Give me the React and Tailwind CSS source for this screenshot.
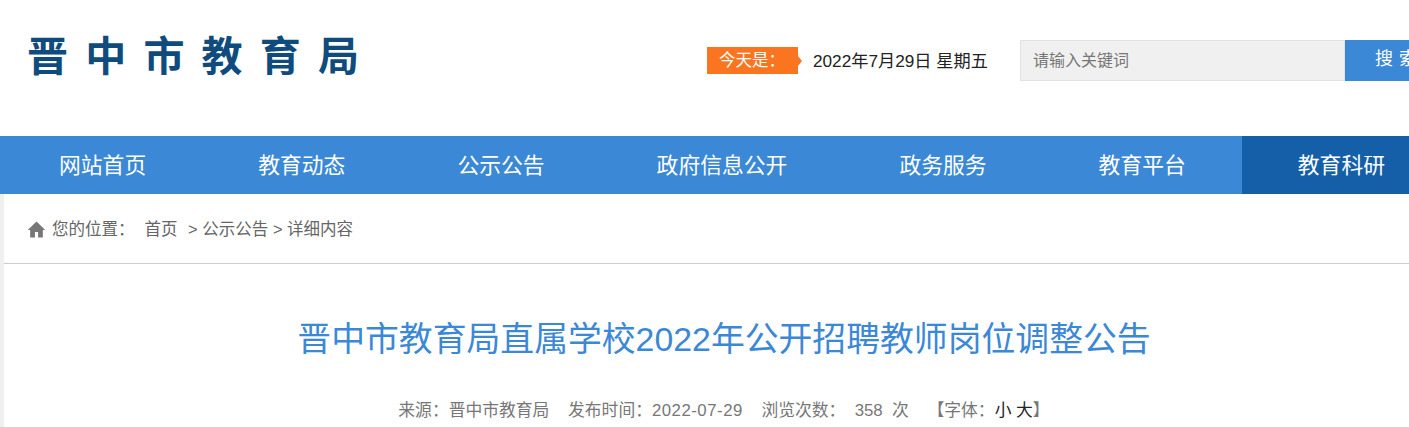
const navItems = ["网站首页", "教育动态", "公示公告", "政府信息公开", "政务服务", "教育平台", "教育科研"];

const cjk = "font-['Liberation_Sans','Noto_Sans_CJK_SC',sans-serif]";

function Header() {
  return (
    <div className="flex h-[136px] items-start">
      <div className="ml-[27px] mt-[29px] w-[680px] shrink-0 text-[41px] leading-[56px] font-bold tracking-[17.2px] text-[#0f4c7d] whitespace-nowrap">
        晋中市教育局
      </div>
      <div className="relative mt-[47px] flex h-[27px] w-[91px] shrink-0 items-center bg-[#fb7520] pl-[12px] text-[16.5px] text-white">
        今天是：
        <span className="absolute right-[-4px] top-[9px] border-y-[5px] border-l-[4px] border-y-transparent border-l-[#fb7520]"></span>
      </div>
      <div className="ml-[15px] mt-[47px] w-[207px] shrink-0 text-[17.2px] leading-[29px] text-[#222] whitespace-nowrap">
        2022年7月29日 星期五
      </div>
      <div className="mt-[40px] flex h-[41px] w-[325px] shrink-0 items-center border border-[#e2e2e2] bg-[#f0f0f0] pl-[12px] text-[16px] text-[#777]">
        请输入关键词
      </div>
      <div className="mt-[40px] h-[41px] w-[100px] shrink-0 bg-[#3b88d6] pl-[30px] text-[18px] leading-[39px] tracking-[6px] text-white whitespace-nowrap">
        搜索
      </div>
    </div>
  );
}

function Nav() {
  return (
    <div className="flex h-[58px] bg-[#3b88d6] pl-[3px]">
      {navItems.map((item, i) => (
        <div
          key={item}
          className={
            "shrink-0 px-[56px] text-[21.8px] leading-[59px] text-white whitespace-nowrap " +
            (i === 6 ? "bg-[#155fa8]" : "")
          }
        >
          {item}
        </div>
      ))}
    </div>
  );
}

function Breadcrumb() {
  return (
    <div className="flex h-[70px] items-center border-b border-[#cccccc] pl-[23px] pt-[1px] text-[16.5px] text-[#666]">
      <svg viewBox="0 0 24 24" className="mr-[6px] h-[19px] w-[19px] fill-[#777]">
        <path d="M12 2 L1 12.5 L4 12.5 L4 22 L10 22 L10 15 L14 15 L14 22 L20 22 L20 12.5 L23 12.5 Z" />
      </svg>
      <span>您的位置：</span>
      <span className="ml-[10px]">首页</span>
      <span className="ml-[6px] whitespace-pre"> &gt; 公示公告 &gt; 详细内容</span>
    </div>
  );
}

function Article() {
  return (
    <div className="pl-[35px] text-center">
      <h1 className="mt-[49px] text-[33.85px] leading-[52px] font-normal text-[#3b88d6]">
        晋中市教育局直属学校2022年公开招聘教师岗位调整公告
      </h1>
      <div className="mt-[34px] text-[16.8px] leading-[24px] text-[#777] whitespace-pre">
        来源：晋中市教育局{"    "}发布时间：<span className="tracking-[0.5px]">2022-07-29</span>{"    "}浏览次数：{"  "}358{"  "}次{"    "}【字体：<span className="text-[#222]">小 大</span>】
      </div>
    </div>
  );
}

export default function App() {
  return (
    <div className={"h-[427px] w-[1409px] overflow-hidden bg-white " + cjk}>
      <Header />
      <Nav />
      <div className="flex">
        <div className="h-[233px] w-[4px] shrink-0 bg-[#f0f0f0]"></div>
        <div className="min-w-0 flex-1">
          <Breadcrumb />
          <Article />
        </div>
      </div>
    </div>
  );
}
